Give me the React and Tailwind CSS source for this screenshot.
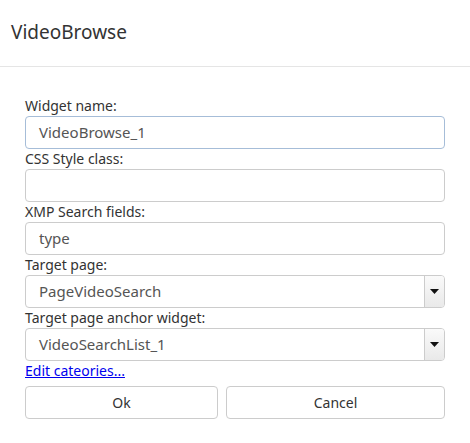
import React from "react";

function Label({ children }) {
  return <div className="h-[20px] leading-[20px] text-[14px] text-[#333]">{children}</div>;
}

function Input({ value, focused }) {
  return (
    <div
      className={`h-[33px] rounded-[4px] border bg-white pl-[13px] flex items-center text-[15px] text-[#555] ${
        focused ? "border-[#a6bdd8]" : "border-[#cccccc]"
      }`}
    >
      {value}
    </div>
  );
}

function Select({ value }) {
  return (
    <div className="h-[33px] rounded-[4px] border border-[#cccccc] bg-white flex items-stretch overflow-hidden">
      <div className="flex-1 pl-[13px] flex items-center text-[15px] text-[#555]">{value}</div>
      <div className="w-[20px] border-l border-[#cccccc] bg-gradient-to-b from-[#fafafa] to-[#e9e9e9] flex items-center justify-center">
        <svg width="9" height="5" viewBox="0 0 9 5">
          <polygon points="0,0 9,0 4.5,5" fill="#111" />
        </svg>
      </div>
    </div>
  );
}

export default function App() {
  return (
    <div
      className="w-[470px] h-[443px] bg-white"
      style={{ fontFamily: '"Noto Sans", "Open Sans", sans-serif' }}
    >
      <div className="h-[67px] border-b border-[#e5e5e5] flex items-center pl-[11px]">
        <div className="text-[19px] text-[#333] leading-none -mt-[2px]">VideoBrowse</div>
      </div>
      <div className="px-[25px] pt-[29px]">
        <Label>Widget name:</Label>
        <Input value="VideoBrowse_1" focused />
        <Label>CSS Style class:</Label>
        <Input value="" />
        <Label>XMP Search fields:</Label>
        <Input value="type" />
        <Label>Target page:</Label>
        <Select value="PageVideoSearch" />
        <Label>Target page anchor widget:</Label>
        <Select value="VideoSearchList_1" />
        <div className="h-[20px] leading-[20px] text-[14px]">
          <a href="#" className="text-[#0000ee] underline">Edit cateories...</a>
        </div>
        <div className="mt-[5px] flex gap-[8px]">
          <button className="w-[193px] h-[33px] rounded-[4px] border border-[#cccccc] bg-white text-[14px] text-[#333]">Ok</button>
          <button className="flex-1 h-[33px] rounded-[4px] border border-[#cccccc] bg-white text-[14px] text-[#333]">Cancel</button>
        </div>
      </div>
    </div>
  );
}
